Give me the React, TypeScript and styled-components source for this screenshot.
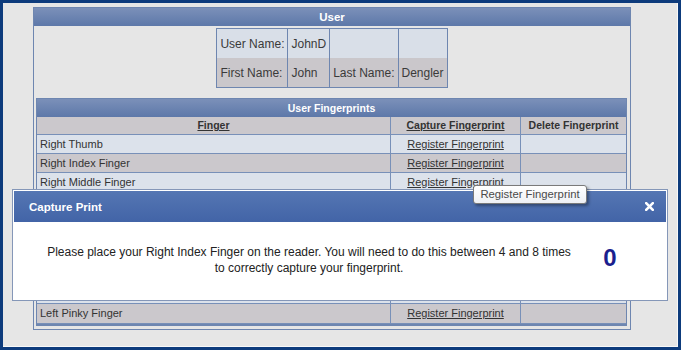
import React, { FC } from 'react';
import styled, { createGlobalStyle } from 'styled-components';

const GlobalStyle = createGlobalStyle`
    html, body {
        margin: 0;
        padding: 0;
        background: #e6e6e6;
    }
    body {
        font-family: "Liberation Sans", Arial, sans-serif;
        color: #333;
    }
`;

const Frame = styled.div`
    position: relative;
    box-sizing: border-box;
    width: 681px;
    height: 350px;
    border: 3px solid #0d3b7c;
    background: #e6e6e6;
    box-shadow: inset -1px -1px 0 #f8f8f8;
    padding: 4px 0 0 30px;
    overflow: hidden;
`;

const Panel = styled.div`
    box-sizing: border-box;
    width: 598px;
    border: 1px solid #6e86b0;
    background: #e6e6e6;
`;

const PanelHeader = styled.div<{ $small?: boolean }>`
    height: 18px;
    line-height: 18px;
    text-align: center;
    font-weight: bold;
    font-size: ${({ $small }) => ($small ? '10.5px' : '11.5px')};
    color: #fff;
    background: linear-gradient(#7b90b9, #5d78a9);
`;

const InfoTable = styled.table`
    border-collapse: collapse;
    margin: 2px auto 0;
    border: 1px solid #6e86b0;
    font-size: 12px;
    color: #3a3a3a;
`;

const InfoRow = styled.tr<{ $alt?: boolean }>`
    background: ${({ $alt }) => ($alt ? '#cac7cb' : '#d9dfe8')};
`;

const InfoCell = styled.td`
    height: 29px;
    padding: 0 3px;
    border-left: 1px solid #6e86b0;
    border-right: 1px solid #6e86b0;
    white-space: nowrap;
`;

const FpPanel = styled.div`
    margin: 10px 3px 3px 2px;
    border: 1px solid #6e86b0;
    border-bottom-width: 2px;
`;

const FpRow = styled.div<{ $alt?: boolean; $head?: boolean }>`
    display: grid;
    grid-template-columns: 354px 130px 1fr;
    height: ${({ $head }) => ($head ? '18px' : '18.75px')};
    box-sizing: border-box;
    border-bottom: 1px solid #7890b8;
    background: ${({ $alt }) => ($alt ? '#cbc8cc' : '#dce2eb')};
    font-size: 11px;

    &:last-child {
        height: 20px;
    }
`;

const FpCell = styled.div<{ $center?: boolean; $head?: boolean }>`
    box-sizing: border-box;
    padding: 0 3px;
    line-height: ${({ $head }) => ($head ? '17px' : '18px')};
    border-right: 1px solid #7890b8;
    text-align: ${({ $center }) => ($center ? 'center' : 'left')};
    font-weight: ${({ $head }) => ($head ? 'bold' : 'normal')};
    font-size: ${({ $head }) => ($head ? '10.5px' : '11px')};
    color: #333;
    white-space: nowrap;

    &:last-child {
        border-right: none;
    }
`;

const Link = styled.a`
    color: #333;
    text-decoration: underline;
    cursor: pointer;
`;

const Modal = styled.div`
    position: absolute;
    left: 9px;
    top: 186px;
    width: 656px;
    height: 112px;
    box-sizing: border-box;
    border: 1px solid #8597b8;
    padding: 1px;
    background: #fff;
    display: flex;
    flex-direction: column;
`;

const ModalHeader = styled.div`
    height: 31px;
    display: flex;
    align-items: center;
    justify-content: space-between;
    padding: 0 12px 0 15px;
    background: linear-gradient(#5576b3, #4264a7);
    color: #fff;
    font-weight: bold;
    font-size: 11.5px;
`;

const CloseButton = styled.span`
    display: flex;
    cursor: pointer;
`;

const ModalBody = styled.div`
    flex: 1;
    display: grid;
    grid-template-columns: 554px 48px;
    align-items: center;
    padding-left: 18px;
    padding-bottom: 2px;
`;

const Message = styled.div`
    text-align: center;
    font-size: 12px;
    line-height: 16px;
    color: #222;
`;

const Counter = styled.div`
    text-align: center;
    font-size: 24px;
    font-weight: bold;
    color: #1b1f8e;
    margin-top: -3px;
`;

const Tooltip = styled.div`
    position: absolute;
    left: 470px;
    top: 182px;
    width: 114px;
    height: 19px;
    box-sizing: border-box;
    border: 1px solid #7a7a7a;
    border-radius: 3px;
    background: linear-gradient(#ffffff, #eef0f4);
    box-shadow: 2px 2px 3px rgba(0, 0, 0, 0.35);
    font-size: 11.3px;
    line-height: 17px;
    text-align: center;
    color: #4a4a4a;
    white-space: nowrap;
`;

const fingers = [
    'Right Thumb',
    'Right Index Finger',
    'Right Middle Finger',
    'Right Ring Finger',
    'Right Pinky Finger',
    'Left Thumb',
    'Left Index Finger',
    'Left Middle Finger',
    'Left Ring Finger',
    'Left Pinky Finger',
];

const CloseIcon: FC = () => (
    <svg width="9" height="9" viewBox="0 0 9 9">
        <path d="M1.2 1.2 L7.8 7.8 M7.8 1.2 L1.2 7.8" stroke="#fff" strokeWidth="2.6" strokeLinecap="square" />
    </svg>
);

export default function App() {
    return (
        <>
            <GlobalStyle />
            <Frame>
                <Panel>
                    <PanelHeader>User</PanelHeader>
                    <InfoTable>
                        <tbody>
                            <InfoRow>
                                <InfoCell>User Name:</InfoCell>
                                <InfoCell>JohnD</InfoCell>
                                <InfoCell />
                                <InfoCell />
                            </InfoRow>
                            <InfoRow $alt>
                                <InfoCell>First Name:</InfoCell>
                                <InfoCell>John</InfoCell>
                                <InfoCell>Last Name:</InfoCell>
                                <InfoCell>Dengler</InfoCell>
                            </InfoRow>
                        </tbody>
                    </InfoTable>
                    <FpPanel>
                        <PanelHeader $small>User Fingerprints</PanelHeader>
                        <FpRow $alt $head>
                            <FpCell $center $head>
                                <Link>Finger</Link>
                            </FpCell>
                            <FpCell $center $head>
                                <Link>Capture Fingerprint</Link>
                            </FpCell>
                            <FpCell $center $head>
                                Delete Fingerprint
                            </FpCell>
                        </FpRow>
                        {fingers.map((f, i) => (
                            <FpRow key={f} $alt={i % 2 === 1}>
                                <FpCell>{f}</FpCell>
                                <FpCell $center>
                                    <Link>Register Fingerprint</Link>
                                </FpCell>
                                <FpCell />
                            </FpRow>
                        ))}
                    </FpPanel>
                </Panel>

                <Modal>
                    <ModalHeader>
                        <span>Capture Print</span>
                        <CloseButton>
                            <CloseIcon />
                        </CloseButton>
                    </ModalHeader>
                    <ModalBody>
                        <Message>
                            Please place your Right Index Finger on the reader. You will need to do this between 4 and 8 times
                            <br />
                            to correctly capture your fingerprint.
                        </Message>
                        <Counter>0</Counter>
                    </ModalBody>
                </Modal>
                <Tooltip>Register Fingerprint</Tooltip>
            </Frame>
        </>
    );
}
